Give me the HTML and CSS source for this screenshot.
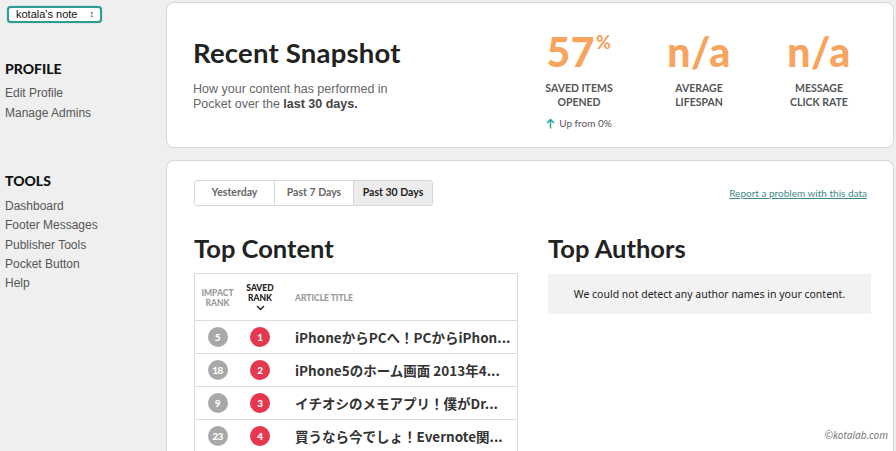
FILE: index.html
```html
<!DOCTYPE html>
<html>
<head>
<meta charset="utf-8">
<link rel="stylesheet" href="styles.css">
</head>
<body>
<div class="page">
  <aside class="sidebar">
    <div class="select">kotala's note <span class="arrows">&#x2195;</span></div>
    <h3 class="side-h profile">PROFILE</h3>
    <a class="side-link">Edit Profile</a>
    <a class="side-link">Manage Admins</a>
    <h3 class="side-h tools">TOOLS</h3>
    <a class="side-link t">Dashboard</a>
    <a class="side-link t">Footer Messages</a>
    <a class="side-link t">Publisher Tools</a>
    <a class="side-link t">Pocket Button</a>
    <a class="side-link t">Help</a>
  </aside>
  <main class="main">
    <section class="card snapshot">
      <div class="intro">
        <h1 class="title">Recent Snapshot</h1>
        <p class="desc">How your content has performed in<br>Pocket over the <b>last 30 days.</b></p>
      </div>
      <div class="stats">
        <div class="stat">
          <div class="num">57<sup>%</sup></div>
          <div class="label">SAVED ITEMS<br>OPENED</div>
          <div class="up"><svg width="9" height="11" viewBox="0 0 9 11"><path d="M4.5 10.5V1.5M1 5l3.5-3.5L8 5" fill="none" stroke="#1fa8a0" stroke-width="1.5"/></svg> Up from 0%</div>
        </div>
        <div class="stat">
          <div class="num">n/a</div>
          <div class="label">AVERAGE<br>LIFESPAN</div>
        </div>
        <div class="stat">
          <div class="num">n/a</div>
          <div class="label">MESSAGE<br>CLICK RATE</div>
        </div>
      </div>
    </section>
    <section class="card data">
      <div class="toolbar">
        <div class="tabs">
          <span class="tab">Yesterday</span>
          <span class="tab">Past 7 Days</span>
          <span class="tab active">Past 30 Days</span>
        </div>
        <a class="report">Report a problem with this data</a>
      </div>
      <div class="cols">
        <div class="col">
          <h2 class="h2">Top Content</h2>
          <div class="table">
            <div class="row head">
              <div class="c1">IMPACT<br>RANK</div>
              <div class="c2 dark">SAVED<br>RANK<br><svg width="9" height="6" viewBox="0 0 9 6"><path d="M1 1l3.5 3.5L8 1" fill="none" stroke="#222" stroke-width="1.4"/></svg></div>
              <div class="c3">ARTICLE TITLE</div>
            </div>
            <div class="row">
              <div class="c1"><span class="dot gray">5</span></div>
              <div class="c2"><span class="dot red">1</span></div>
              <div class="c3 art">iPhoneからPCへ！PCからiPhon...</div>
            </div>
            <div class="row">
              <div class="c1"><span class="dot gray">18</span></div>
              <div class="c2"><span class="dot red">2</span></div>
              <div class="c3 art">iPhone5のホーム画面 2013年4...</div>
            </div>
            <div class="row">
              <div class="c1"><span class="dot gray">9</span></div>
              <div class="c2"><span class="dot red">3</span></div>
              <div class="c3 art">イチオシのメモアプリ！僕がDr...</div>
            </div>
            <div class="row">
              <div class="c1"><span class="dot gray">23</span></div>
              <div class="c2"><span class="dot red">4</span></div>
              <div class="c3 art">買うなら今でしょ！Evernote関...</div>
            </div>
          </div>
        </div>
        <div class="col right">
          <h2 class="h2">Top Authors</h2>
          <div class="empty">We could not detect any author names in your content.</div>
        </div>
      </div>
      <div class="credit">©kotalab.com</div>
    </section>
  </main>
</div>
</body>
</html>
```
FILE: styles.css
```css
* { box-sizing: border-box; margin: 0; padding: 0; }
html, body { height: 100%; overflow: hidden; }
body {
  background: #efefef;
  font-family: "Liberation Sans", Arial, sans-serif;
  color: #333;
}
.page { display: flex; height: 451px; }
.sidebar {
  width: 166px;
  flex: none;
  padding: 6px 0 0 5px;
  display: flex;
  flex-direction: column;
}
.select {
  width: 95px;
  height: 17px;
  margin-left: 2px;
  border: 2px solid #2f9c94;
  border-radius: 4px;
  background: #fff;
  font-size: 11px;
  line-height: 13px;
  padding-left: 7px;
  color: #111;
  box-shadow: 0 0 1px #2f9c94;
  position: relative;
}
.arrows { position: absolute; right: 6px; top: 0; font-size: 9px; }
.side-h {
  font-family: Lato, "Liberation Sans", sans-serif;
  font-weight: 900;
  font-size: 14px;
  color: #111;
  line-height: 16px;
}
.profile { margin-top: 38px; margin-bottom: 6px; }
.tools { margin-top: 50px; margin-bottom: 8px; }
.side-link {
  font-size: 12px;
  line-height: 20px;
  color: #555;
}
.side-link.t { line-height: 19.3px; }
.main {
  flex: 1;
  padding: 2px 3px 0 0;
  display: flex;
  flex-direction: column;
  gap: 12px;
}
.card {
  background: #fff;
  border: 1px solid #d8d8d8;
  border-radius: 8px;
}
.snapshot {
  flex: none;
  height: 146px;
  display: flex;
  justify-content: space-between;
  padding: 0 14px 0 26px;
}
.intro { padding-top: 33px; }
.title {
  font-family: Lato, "Noto Sans", sans-serif;
  font-weight: 700;
  font-size: 27.5px;
  line-height: 34px;
  color: #222;
  letter-spacing: 0.2px;
}
.desc {
  margin-top: 12px;
  font-family: "Liberation Sans", Arial, sans-serif;
  font-size: 12.5px;
  line-height: 15px;
  color: #666;
}
.desc b { font-weight: 700; color: #444; }
.stats { display: flex; padding-top: 24px; }
.stat {
  width: 120px;
  display: flex;
  flex-direction: column;
  align-items: center;
  text-align: center;
}
.num {
  font-family: Lato, "Noto Sans", sans-serif;
  font-weight: 900;
  font-size: 41px;
  line-height: 50px;
  color: #f7a55e;
  letter-spacing: 0.5px;
}
.num sup {
  font-size: 18px;
  vertical-align: top;
  line-height: 30px;
  margin-left: 1px;
}
.label {
  margin-top: 4px;
  font-family: Lato, "Noto Sans", sans-serif;
  font-weight: 700;
  font-size: 10.5px;
  line-height: 14px;
  color: #555;
}
.up {
  margin-top: 8px;
  font-family: Lato, "Noto Sans", sans-serif;
  font-size: 10px;
  color: #555;
  display: flex;
  align-items: center;
  gap: 4px;
}
.data {
  flex: 1;
  border-bottom: none;
  border-radius: 8px 8px 0 0;
  padding: 19px 22px 0 27px;
  position: relative;
}
.toolbar { display: flex; justify-content: space-between; align-items: center; }
.tabs {
  display: flex;
  border: 1px solid #d8d8d8;
  border-radius: 3px;
  overflow: hidden;
}
.tab {
  width: 79px;
  height: 24px;
  line-height: 22px;
  text-align: center;
  font-family: Lato, "Noto Sans", sans-serif;
  font-weight: 700;
  font-size: 10.5px;
  color: #666;
  border-left: 1px solid #d8d8d8;
}
.tab:first-child { border-left: none; }
.tab.active { background: #ececec; color: #222; }
.report {
  font-family: Lato, "Noto Sans", sans-serif;
  font-size: 10px;
  color: #3f8a86;
  text-decoration: underline;
  margin-right: 4px;
}
.cols { display: flex; gap: 30px; margin-top: 28px; }
.col { width: 324px; }
.col.right { width: 323px; }
.h2 {
  font-family: Lato, "Noto Sans", sans-serif;
  font-weight: 700;
  font-size: 25.5px;
  line-height: 28px;
  color: #222;
  margin-bottom: 11px;
}
.table {
  border: 1px solid #dcdcdc;
  border-bottom: none;
}
.row {
  display: flex;
  align-items: center;
  height: 33px;
  border-top: 1px solid #dcdcdc;
}
.row:first-child { border-top: none; }
.row.head { height: 46px; padding-top: 2px; }
.c1 { width: 45px; text-align: center; }
.c2 { width: 40px; text-align: center; }
.c3 { flex: 1; padding-left: 15px; white-space: nowrap; overflow: hidden; }
.head div {
  font-family: Lato, "Noto Sans", sans-serif;
  font-weight: 900;
  font-size: 8.5px;
  line-height: 10px;
  color: #999;
}
.head .dark { color: #222; }
.head svg { display: inline-block; margin-top: 1px; }
.dot {
  display: inline-flex;
  align-items: center;
  justify-content: center;
  width: 20px;
  height: 20px;
  border-radius: 50%;
  color: #fff;
  font-family: Lato, "Noto Sans", sans-serif;
  font-weight: 900;
  font-size: 10px;
  letter-spacing: -0.5px;
}
.gray { background: #a8a8a8; }
.red { background: #e5384f; }
.art {
  font-family: "Noto Sans CJK JP", "Noto Sans", sans-serif;
  font-weight: 700;
  font-size: 13.5px;
  color: #333;
  padding-left: 15px;
}
.empty {
  margin-top: 12px;
  height: 40px;
  background: #f2f2f2;
  display: flex;
  align-items: center;
  justify-content: center;
  font-family: "Noto Sans", "Liberation Sans", sans-serif;
  font-size: 10.5px;
  color: #222;
}
.credit {
  position: absolute;
  right: 5px;
  bottom: 10px;
  font-family: "Noto Sans", sans-serif;
  font-style: italic;
  font-size: 10px;
  color: #777;
}
```
